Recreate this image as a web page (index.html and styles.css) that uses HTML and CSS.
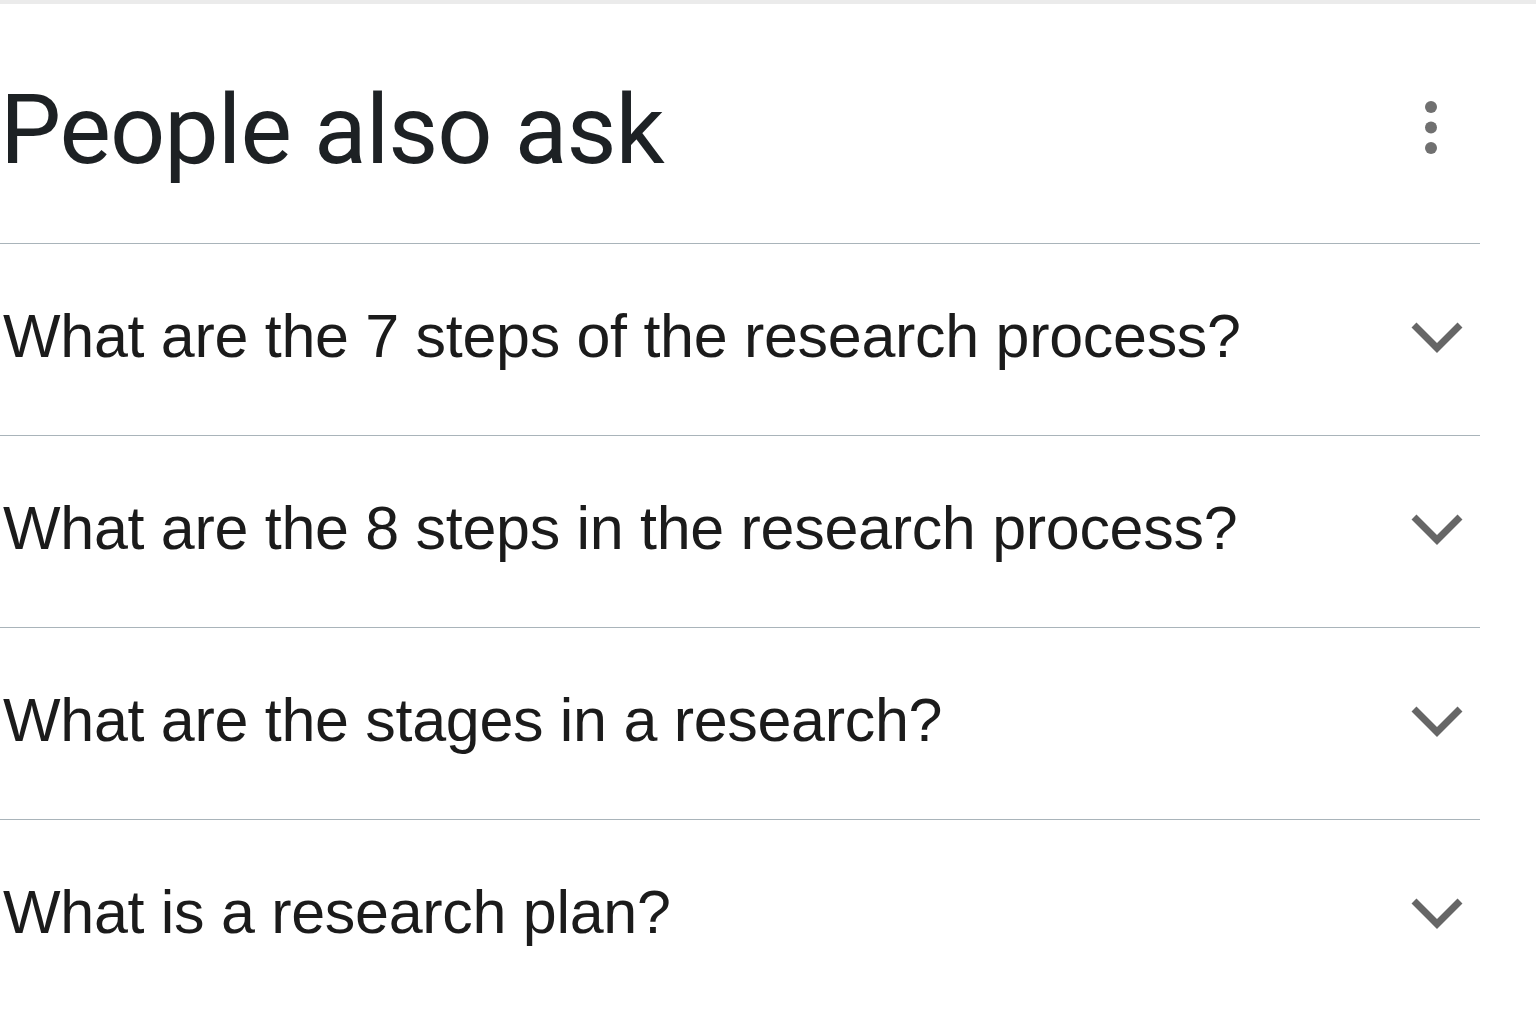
FILE: index.html
```html
<!DOCTYPE html>
<html lang="en">
<head>
<meta charset="utf-8">
<title>People also ask</title>
<link rel="stylesheet" href="styles.css">
</head>
<body>
<div class="topbar"></div>
<main class="paa">
  <header class="paa-head">
    <h2 class="paa-title">People also ask</h2>
    <button class="more" aria-label="More options">
      <svg width="24" height="60" viewBox="0 0 24 60"><circle cx="12" cy="10" r="6"/><circle cx="12" cy="30.5" r="6"/><circle cx="12" cy="51" r="6"/></svg>
    </button>
  </header>
  <ul class="qlist">
    <li class="q"><span class="q-text">What are the 7 steps of the research process?</span><svg class="chev" width="52" height="32" viewBox="0 0 52 32"><path d="M3 4 L26 27 L49 4"/></svg></li>
    <li class="q"><span class="q-text">What are the 8 steps in the research process?</span><svg class="chev" width="52" height="32" viewBox="0 0 52 32"><path d="M3 4 L26 27 L49 4"/></svg></li>
    <li class="q"><span class="q-text">What are the stages in a research?</span><svg class="chev" width="52" height="32" viewBox="0 0 52 32"><path d="M3 4 L26 27 L49 4"/></svg></li>
    <li class="q"><span class="q-text">What is a research plan?</span><svg class="chev" width="52" height="32" viewBox="0 0 52 32"><path d="M3 4 L26 27 L49 4"/></svg></li>
  </ul>
</main>
</body>
</html>
```
FILE: styles.css
```css
html, body {
  margin: 0;
  padding: 0;
  background: #ffffff;
}
.topbar {
  height: 4px;
  background: #ebebeb;
}
.paa {
  width: 1480px;
}
.paa-head {
  height: 239px;
  display: flex;
  align-items: center;
  justify-content: space-between;
  border-bottom: 1px solid #a9b4ba;
}
.paa-title {
  margin: 13px 0 0 0;
  font-family: Roboto, "Open Sans", sans-serif;
  font-weight: 400;
  font-size: 97px;
  line-height: 1;
  color: #1d2124;
  letter-spacing: -1px;
}
.more {
  margin: 6px 37px 0 0;
  padding: 0;
  border: 0;
  background: none;
  display: flex;
}
.more svg circle {
  fill: #707070;
}
.qlist {
  list-style: none;
  margin: 0;
  padding: 0;
}
.q {
  height: 191px;
  display: flex;
  align-items: center;
  justify-content: space-between;
  border-bottom: 1px solid #a9b4ba;
}
.q:last-child {
  border-bottom: 0;
}
.q-text {
  padding-left: 3px;
  margin-bottom: 7px;
  font-family: "Liberation Sans", Arial, sans-serif;
  font-size: 61px;
  letter-spacing: -0.3px;
  color: #1b1b1b;
  line-height: 1;
}
.chev {
  margin-right: 17px;
  margin-top: -6px;
}
.chev path {
  fill: none;
  stroke: #666666;
  stroke-width: 7;
  stroke-linecap: butt;
  stroke-linejoin: miter;
}
```
